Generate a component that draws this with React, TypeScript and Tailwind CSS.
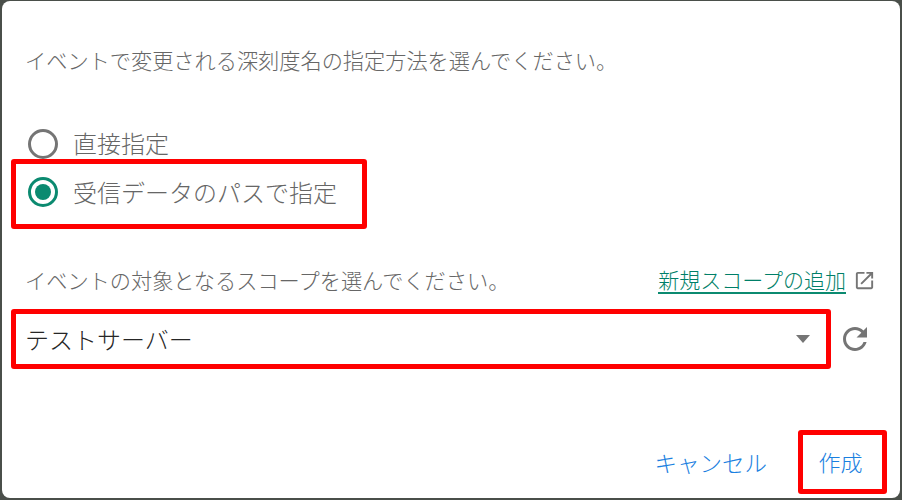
const font = "[font-family:'Noto_Sans_CJK_JP','Noto_Sans',sans-serif]";

export default function App() {
  return (
    <div className={`h-[500px] w-[902px] overflow-hidden bg-[#4a4f4a] pb-[2px] pl-[2px] pr-[2px] pt-[1px] ${font}`}>
      <div className="relative flex h-full w-full flex-col rounded-[8px] bg-white pl-[9px] pr-[10px]">
        {/* description */}
        <p className="mt-[44px] pl-[14px] text-[21.2px] leading-[30px] font-light text-[#666666]">
          イベントで変更される深刻度名の指定方法を選んでください。
        </p>

        {/* radio group */}
        <div className="mt-[54px] flex h-[30px] items-center pl-[17px]">
          <span className="h-[30px] w-[30px] rounded-full border-[3px] border-[#757575] bg-white" />
          <span className="ml-[15px] mt-[-2px] text-[24px] leading-[30px] font-light text-[#666666]">直接指定</span>
        </div>
        <div className="flex h-[70px] w-[356px] items-center rounded-[3px] border-[5px] border-[#ff0000] pb-[5px] pl-[12px]">
          <span className="flex h-[30px] w-[30px] items-center justify-center rounded-full border-[3px] border-[#0b8a70]">
            <span className="h-[16px] w-[16px] rounded-full bg-[#0b8a70]" />
          </span>
          <span className="ml-[15px] text-[24px] leading-[30px] font-light text-[#666666]">受信データのパスで指定</span>
        </div>

        {/* scope */}
        <div className="mt-[36px] flex h-[30px] items-center justify-between pl-[14px] pr-[14px]">
          <span className="text-[21.2px] leading-[30px] font-light text-[#666666]">イベントの対象となるスコープを選んでください。</span>
          <span className="flex items-center">
            <a className="ml-[-2px] border-b-[2px] border-[#0b8a70] text-[21px] leading-[26px] font-light text-[#007f68]">新規スコープの追加</a>
            <svg className="ml-[7px] h-[23px] w-[23px]" viewBox="0 0 24 24" fill="#757575">
              <path d="M19 19H5V5h7V3H5c-1.11 0-2 .9-2 2v14c0 1.1.89 2 2 2h14c1.1 0 2-.9 2-2v-7h-2v7zM14 3v2h3.59l-9.83 9.83 1.41 1.41L19 6.41V10h2V3h-7z" />
            </svg>
          </span>
        </div>
        <div className="mt-[14px] flex items-center">
          <div className="flex h-[60px] w-[820px] items-center justify-between rounded-[3px] border-[5px] border-[#ff0000] pl-[9px] pr-[16px]">
            <span className="text-[24px] leading-[30px] font-light text-[#262626]">テストサーバー</span>
            <span className="h-0 w-0 border-x-[7px] border-t-[8px] border-x-transparent border-t-[#757575]" />
          </div>
          <svg className="ml-[6px] h-[36px] w-[36px]" viewBox="0 0 24 24" fill="#757575">
            <path d="M17.65 6.35C16.2 4.9 14.21 4 12 4c-4.42 0-7.99 3.58-7.99 8s3.57 8 7.99 8c3.73 0 6.84-2.55 7.73-6h-2.08c-.82 2.33-3.04 4-5.65 4-3.31 0-6-2.69-6-6s2.69-6 6-6c1.66 0 3.14.69 4.22 1.78L13 11h7V4l-2.35 2.35z" />
          </svg>
        </div>

        {/* actions */}
        <div className="mt-[61px] flex items-center justify-end pr-[3px]">
          <span className="text-[22.5px] leading-[30px] font-light text-[#1a80e0]">キャンセル</span>
          <span className="ml-[31px] flex h-[64px] w-[89px] items-center justify-center rounded-[3px] border-[5px] border-[#ff0000] pb-[2px] pr-[4px] text-[22px] font-light text-[#1a80e0]">
            作成
          </span>
        </div>
      </div>
    </div>
  );
}
